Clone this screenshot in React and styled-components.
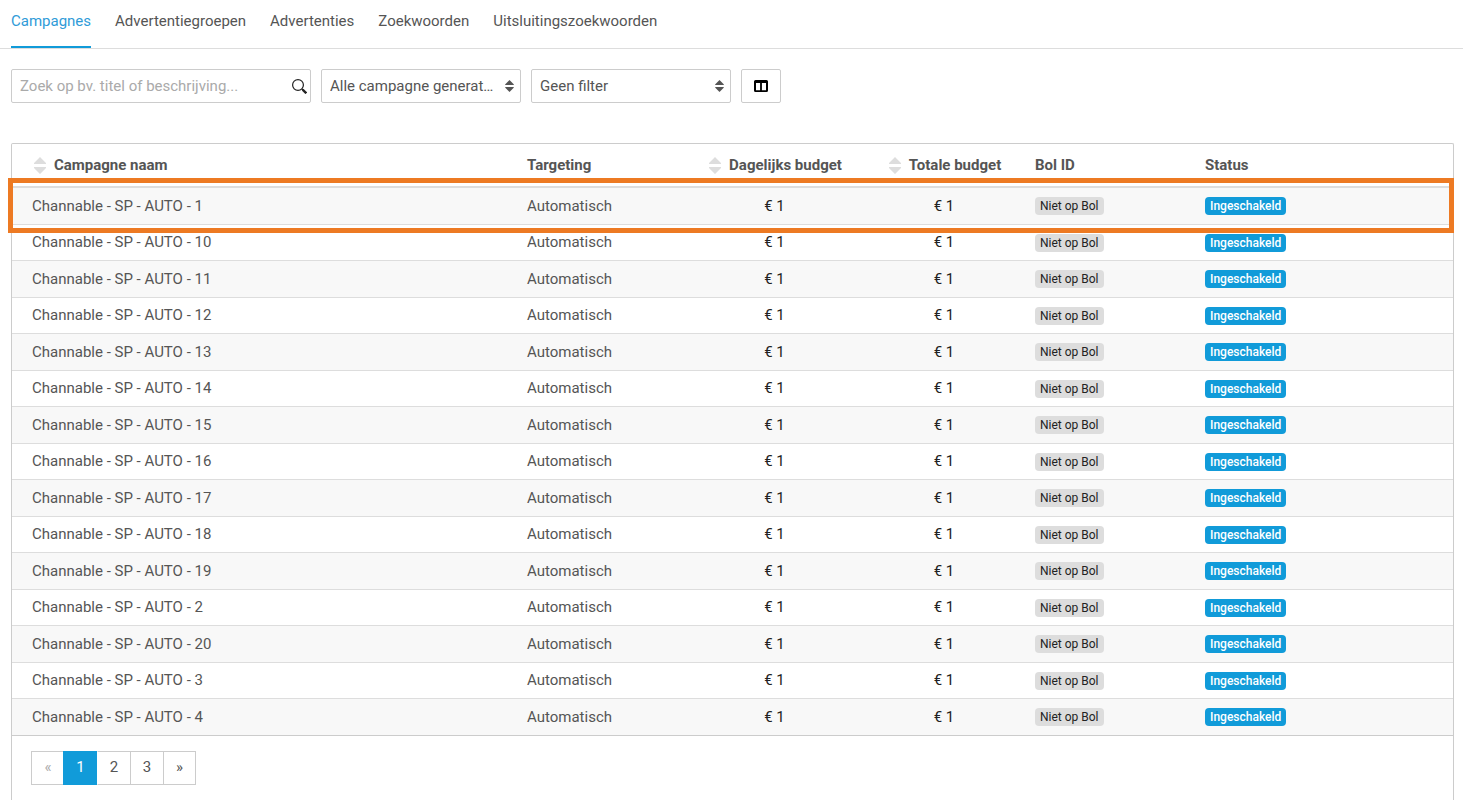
import React, { useState } from "react";
import styled, { createGlobalStyle, css } from "styled-components";

const GlobalStyle = createGlobalStyle`
  *, *::before, *::after { box-sizing: border-box; }
  body {
    margin: 0;
    background: #fff;
    color: #555;
    font-family: Roboto, "Liberation Sans", sans-serif;
    font-size: 15px;
    line-height: 20px;
  }
  button, input, select { font: inherit; color: inherit; }
`;

const Tabs = styled.nav`
  display: flex;
  gap: 24px;
  padding: 0 11px;
  border-bottom: 1px solid #ddd;
`;

const Tab = styled.a`
  height: 48px;
  padding-top: 11px;
  color: ${(p) => (p.$active ? "#2f9bd8" : "#555")};
  border-bottom: 2px solid ${(p) => (p.$active ? "#119bd9" : "transparent")};
  text-decoration: none;
`;

const Main = styled.main`
  padding: 20px 9px 0 11px;
`;

const Toolbar = styled.form`
  display: flex;
  gap: 10px;
  margin-bottom: 40px;
`;

const boxed = css`
  height: 34px;
  border: 1px solid #ccc;
  border-radius: 2px;
  background: #fff;
`;

const Field = styled.label`
  position: relative;
  width: ${(p) => p.$width}px;
  svg {
    position: absolute;
    top: ${(p) => p.$iconTop}px;
    right: ${(p) => p.$iconRight}px;
    pointer-events: none;
  }
`;

const SearchInput = styled.input`
  ${boxed}
  display: block;
  width: 100%;
  padding: 0 28px 0 8px;
  &::placeholder { color: #aaa; opacity: 1; }
`;

const Select = styled.select`
  ${boxed}
  display: block;
  width: 100%;
  padding: 0 26px 0 8px;
  appearance: none;
  text-overflow: ellipsis;
  white-space: nowrap;
  overflow: hidden;
`;

const IconButton = styled.button`
  ${boxed}
  display: flex;
  align-items: center;
  justify-content: center;
  width: 40px;
  padding: 0;
  color: #000;
`;

const Card = styled.section`
  border: 1px solid #ccc;
  border-bottom: 0;
  border-radius: 2px 2px 0 0;
`;

const Table = styled.table`
  width: 100%;
  table-layout: fixed;
  border-collapse: separate;
  border-spacing: 0;
`;

const Col = styled.col`
  width: ${(p) => (p.$width ? `${p.$width}px` : "auto")};
`;

const cellPadding = css`
  padding: ${(p) => (p.$first ? "0 10px 0 20px" : p.$center ? "0 8px 0 15px" : "0 10px")};
  text-align: ${(p) => (p.$center ? "center" : "left")};
  white-space: nowrap;
`;

const HeadCell = styled.th`
  ${cellPadding}
  height: 44px;
  border-bottom: 2px solid #ddd;
  font-weight: 700;
`;

const SortButton = styled.button`
  display: inline-flex;
  align-items: center;
  gap: 8px;
  padding: 0 0 0 2px;
  border: 0;
  background: none;
  font-weight: 700;
  vertical-align: top;
`;

const Cell = styled.td`
  ${cellPadding}
  border-bottom: 1px solid #ddd;
  color: ${(p) => (p.$center ? "#222" : "#555")};
`;

const BadgeCell = styled(Cell)``;

const Row = styled.tr`
  position: relative;
  height: 36px;
  &:nth-child(odd) { height: 37px; background: #f8f8f8; }
  &:nth-child(even) ${Cell}:not(${BadgeCell}) { padding-bottom: 1px; }
  &:last-child td { border-bottom-color: #ccc; }
`;

const Highlight = styled.span`
  position: absolute;
  top: -10px;
  right: -1px;
  bottom: -8px;
  left: -4px;
  border: 5px solid #ed7a23;
  pointer-events: none;
`;

const Badge = styled.span`
  display: block;
  width: fit-content;
  padding: 0 5px;
  border-radius: 4px;
  background: ${(p) => (p.$on ? "#119bd9" : "#ddd")};
  color: ${(p) => (p.$on ? "#fff" : "#222")};
  font-size: 12px;
  font-weight: ${(p) => (p.$on ? 500 : 400)};
  line-height: 18px;
`;

const Pagination = styled.nav`
  display: flex;
  padding: 15px 19px;
`;

const PageButton = styled.button`
  width: 33px;
  height: 34px;
  padding: 0 0 2px;
  border: 1px solid #ccc;
  border-right-width: 0;
  background: #fff;
  &:last-child { border-right-width: 1px; }
  &:disabled { color: #aaa; }
  &[aria-current="page"] {
    width: 34px;
    margin-left: -1px;
    border-color: #119bd9;
    background: #119bd9;
    color: #fff;
  }
  &[aria-current="page"] + & { border-left-color: #fff; }
`;

const SearchIcon = () => (
  <svg width="15" height="15" viewBox="0 0 15 15" fill="none" stroke="#222" aria-hidden="true">
    <circle cx="6" cy="6" r="5.4" strokeWidth="1.2" />
    <path d="M9.8 9.8 11 11" strokeWidth="1.2" />
    <path d="M10.6 10.6 14.3 14.3" strokeWidth="2.3" />
  </svg>
);

const CaretsIcon = () => (
  <svg width="9" height="12" viewBox="0 0 9 12" fill="#555" aria-hidden="true">
    <path d="M4.5 0 8.7 4.2Q9.2 5 8.4 5H.6Q-.2 5 .3 4.2ZM4.5 12 .3 7.8Q-.2 7 .6 7H8.4Q9.2 7 8.7 7.8Z" />
  </svg>
);

const SortIcon = () => (
  <svg width="12" height="17" viewBox="0 0 12 17" fill="#ddd" aria-hidden="true">
    <path d="M6 0 12 6V7H0V6ZM6 17 0 11V10H12V11Z" />
  </svg>
);

const ColumnsIcon = () => (
  <svg width="14" height="12" viewBox="0 0 14 12" aria-hidden="true">
    <path
      fill="currentColor"
      fillRule="evenodd"
      d="M1.5 0H12.5Q14 0 14 1.5V10.5Q14 12 12.5 12H1.5Q0 12 0 10.5V1.5Q0 0 1.5 0ZM2 3V10.3H6.1V3ZM7.9 3V10.3H12V3Z"
    />
  </svg>
);

const tabs = ["Campagnes", "Advertentiegroepen", "Advertenties", "Zoekwoorden", "Uitsluitingszoekwoorden"];
const campaigns = [1, 10, 11, 12, 13, 14, 15, 16, 17, 18, 19, 2, 20, 3, 4];
const columns = [
  { label: "Campagne naam", sortable: true, first: true },
  { label: "Targeting", width: 169 },
  { label: "Dagelijks budget", width: 170, sortable: true, center: true },
  { label: "Totale budget", width: 169, sortable: true, center: true },
  { label: "Bol ID", width: 170 },
  { label: "Status", width: 258 },
];

export default function App() {
  const [page, setPage] = useState(1);
  return (
    <>
      <GlobalStyle />
      <Tabs>
        {tabs.map((t, i) => (
          <Tab key={t} href="#" $active={i === 0}>{t}</Tab>
        ))}
      </Tabs>
      <Main>
        <Toolbar onSubmit={(e) => e.preventDefault()}>
          <Field $width={300} $iconTop={10} $iconRight={4}>
            <SearchInput type="text" aria-label="Zoeken" placeholder="Zoek op bv. titel of beschrijving..." />
            <SearchIcon />
          </Field>
          <Field $width={200} $iconTop={11} $iconRight={7}>
            <Select aria-label="Campagne generator">
              <option>Alle campagne generatoren</option>
            </Select>
            <CaretsIcon />
          </Field>
          <Field $width={200} $iconTop={11} $iconRight={7}>
            <Select aria-label="Filter">
              <option>Geen filter</option>
            </Select>
            <CaretsIcon />
          </Field>
          <IconButton type="button" aria-label="Kolommen"><ColumnsIcon /></IconButton>
        </Toolbar>
        <Card>
          <Table>
            <colgroup>
              {columns.map((c) => <Col key={c.label} $width={c.width} />)}
            </colgroup>
            <thead>
              <tr>
                {columns.map((c) => (
                  <HeadCell key={c.label} scope="col" $first={c.first} $center={c.center}>
                    {c.sortable ? (
                      <SortButton type="button"><SortIcon />{c.label}</SortButton>
                    ) : c.label}
                  </HeadCell>
                ))}
              </tr>
            </thead>
            <tbody>
              {campaigns.map((n, i) => (
                <Row key={n}>
                  <Cell $first>
                    Channable - SP - AUTO - {n}
                    {i === 0 && <Highlight />}
                  </Cell>
                  <Cell>Automatisch</Cell>
                  <Cell $center>€ 1</Cell>
                  <Cell $center>€ 1</Cell>
                  <BadgeCell><Badge>Niet op Bol</Badge></BadgeCell>
                  <BadgeCell><Badge $on>Ingeschakeld</Badge></BadgeCell>
                </Row>
              ))}
            </tbody>
          </Table>
          <Pagination aria-label="Paginering">
            <PageButton type="button" aria-label="Vorige" disabled={page === 1} onClick={() => setPage(page - 1)}>«</PageButton>
            {[1, 2, 3].map((n) => (
              <PageButton key={n} type="button" aria-current={page === n ? "page" : undefined} onClick={() => setPage(n)}>{n}</PageButton>
            ))}
            <PageButton type="button" aria-label="Volgende" disabled={page === 3} onClick={() => setPage(page + 1)}>»</PageButton>
          </Pagination>
        </Card>
      </Main>
    </>
  );
}
